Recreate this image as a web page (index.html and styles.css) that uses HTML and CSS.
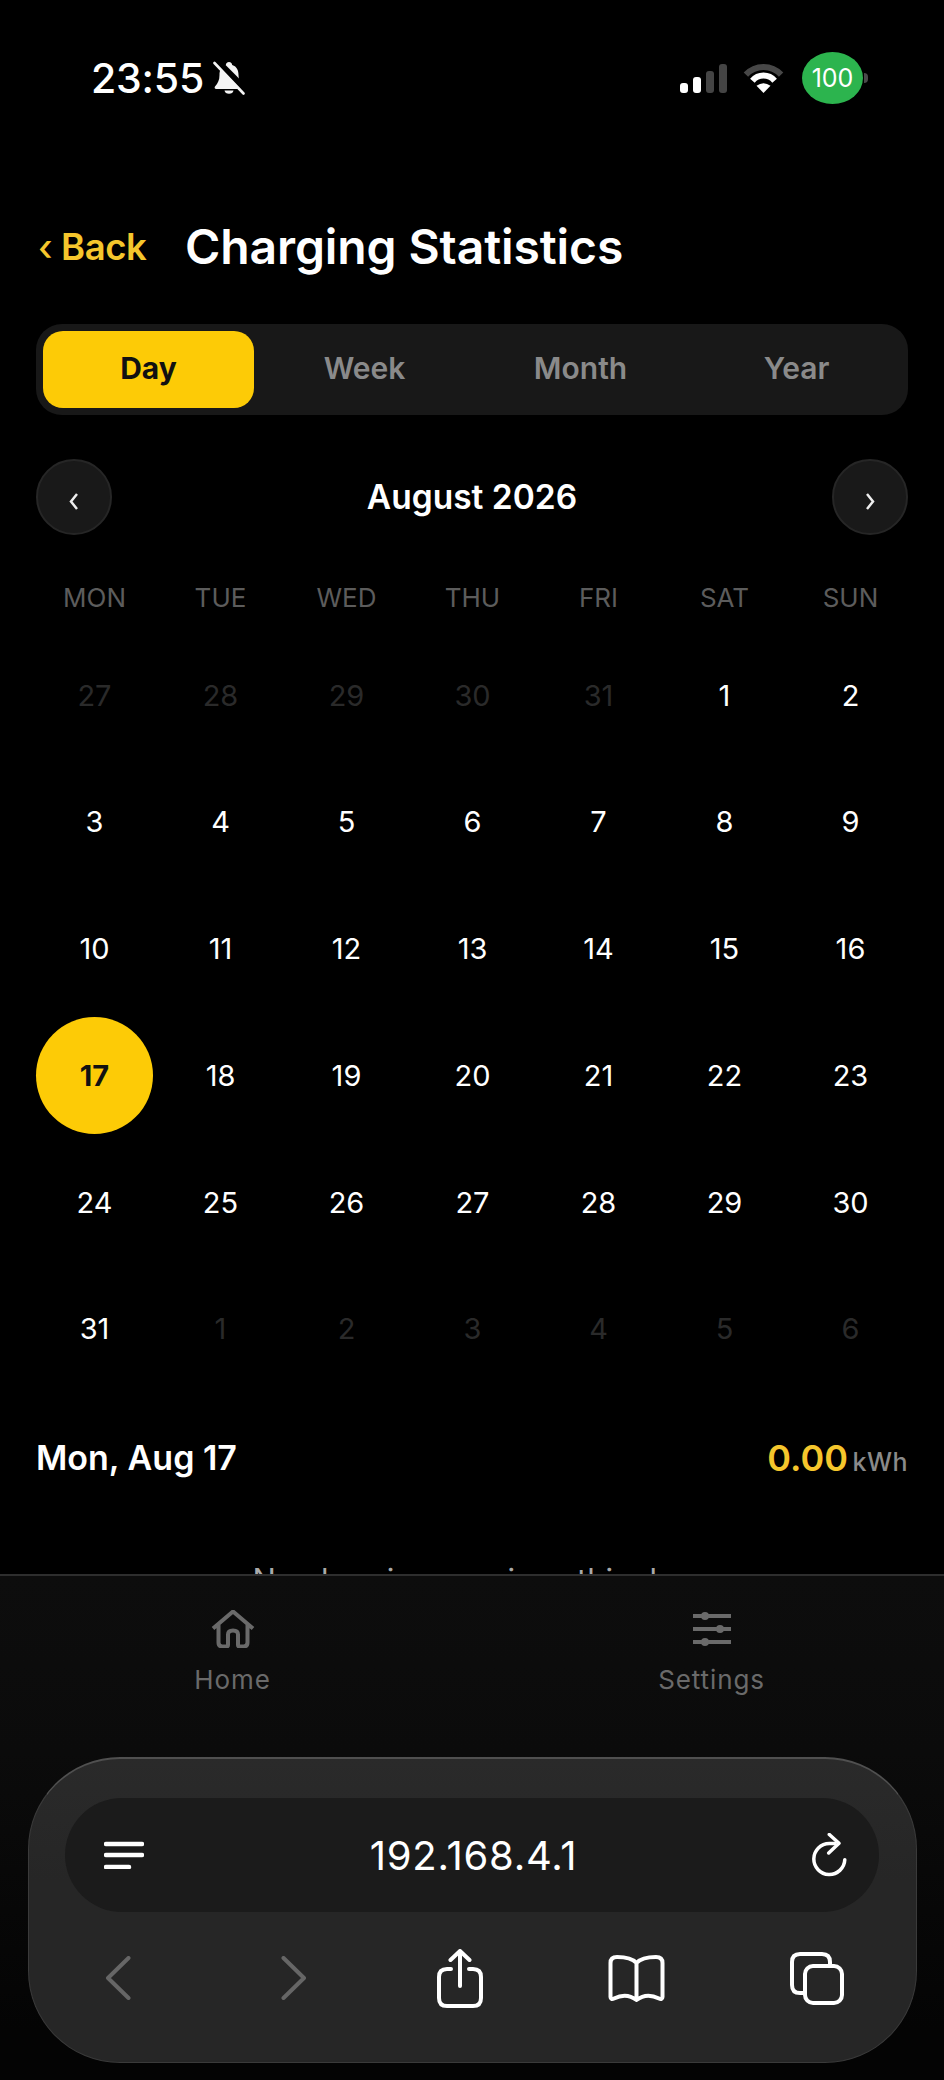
FILE: index.html
```html
<!DOCTYPE html>
<html lang="en">
<head>
  <meta charset="UTF-8" />
  <meta name="viewport" content="width=device-width, initial-scale=1" />
  <title>Charging Statistics</title>
  <link rel="stylesheet" href="styles.css">
</head>
<body>
  <!-- Status bar -->
  <div class="status">
    <div class="status-left">
      <span class="time">23:55</span>
      <svg class="bell" viewBox="0 0 32 34">
        <path d="M16 1c-2 0-3 1.400-3.200 3C8 5.500 6.500 9.500 6.500 14c0 5-1.500 8-4.500 11.500-.8 1-.2 2.500 1.200 2.500h25.600c1.400 0 2-1.500 1.200-2.500C27 22 25.500 19 25.500 14c0-4.500-1.500-8.500-6.300-10C19 2.400 18 1 16 1z" fill="#f4f4f4"/>
        <path d="M11.500 29.500a4.600 4.200 0 0 0 9 0z" fill="#f4f4f4"/>
        <path d="M3 -1L35 31" stroke="#000" stroke-width="6.500"/>
        <path d="M1.500 2L30.500 32.500" stroke="#f4f4f4" stroke-width="2.600" stroke-linecap="round"/>
      </svg>
    </div>
    <div class="status-right">
      <div class="signal">
        <i class="bar bar1"></i><i class="bar bar2"></i><i class="bar bar3"></i><i class="bar bar4"></i>
      </div>
      <svg class="wifi" viewBox="0 0 41 30">
        <path d="M2.900 11.600A24 24 0 0 1 38.100 11.600" fill="none" stroke="#474747" stroke-width="6"/>
        <path d="M9.400 17.700A14.500 14.500 0 0 1 31.600 17.700" fill="none" stroke="#fff" stroke-width="6"/>
        <path d="M20.500 30L13.500 22.800Q20.500 17.500 27.500 22.800Z" fill="#fff"/>
      </svg>
      <div class="battery">100</div>
      <i class="battery-nub"></i>
    </div>
  </div>

  <!-- Cabecera -->
  <div class="header">
    <a class="back"><span class="back-arrow">‹</span> Back</a>
    <h1>Charging Statistics</h1>
  </div>

  <div class="content">
    <div class="segment">
      <button class="seg-btn active">Day</button>
      <button class="seg-btn">Week</button>
      <button class="seg-btn">Month</button>
      <button class="seg-btn">Year</button>
    </div>

    <div class="month-nav">
      <button class="nav-btn">
        <svg viewBox="0 0 14 20"><path d="M10 3L4 10.500 10 18" /></svg>
      </button>
      <div class="month-title">August 2026</div>
      <button class="nav-btn">
        <svg viewBox="0 0 14 20"><path d="M4 3L10 10.500 4 18" /></svg>
      </button>
    </div>

    <div class="weekdays">
      <span>MON</span><span>TUE</span><span>WED</span><span>THU</span><span>FRI</span><span>SAT</span><span>SUN</span>
    </div>

    <div class="days">
      <div class="day off">27</div><div class="day off">28</div><div class="day off">29</div><div class="day off">30</div><div class="day off">31</div><div class="day">1</div><div class="day">2</div>
      <div class="day">3</div><div class="day">4</div><div class="day">5</div><div class="day">6</div><div class="day">7</div><div class="day">8</div><div class="day">9</div>
      <div class="day">10</div><div class="day">11</div><div class="day">12</div><div class="day">13</div><div class="day">14</div><div class="day">15</div><div class="day">16</div>
      <div class="day selected">17</div><div class="day">18</div><div class="day">19</div><div class="day">20</div><div class="day">21</div><div class="day">22</div><div class="day">23</div>
      <div class="day">24</div><div class="day">25</div><div class="day">26</div><div class="day">27</div><div class="day">28</div><div class="day">29</div><div class="day">30</div>
      <div class="day">31</div><div class="day off">1</div><div class="day off">2</div><div class="day off">3</div><div class="day off">4</div><div class="day off">5</div><div class="day off">6</div>
    </div>

    <div class="summary">
      <span class="summary-date">Mon, Aug 17</span>
      <span class="summary-total"><b>0.00</b> <small>kWh</small></span>
    </div>

    <p class="empty">No charging sessions this day</p>
  </div>

  <div class="bottom">
    <div class="tabbar">
      <a class="tab">
        <svg class="tab-icon" viewBox="0 0 44 38">
          <path d="M2 18.500L22 1.500 42 18.500M7.500 14.500V32.500Q7.500 36.500 11.500 36.500H15.500Q17 36.500 17 35V24.500Q17 20.500 22 20.500 27 20.500 27 24.500V35Q27 36.500 28.500 36.500H32.500Q36.500 36.500 36.500 32.500V14.500"/>
        </svg>
        <span>Home</span>
      </a>
      <a class="tab">
        <svg class="tab-icon tab-icon-sliders" viewBox="0 0 38 34">
          <path d="M0 4H38M0 17H38M0 30H38"/>
          <circle cx="12" cy="4" r="4"/><circle cx="27" cy="17" r="4"/><circle cx="12" cy="30" r="4"/>
        </svg>
        <span>Settings</span>
      </a>
    </div>

    <!-- Barra del navegador -->
    <div class="browser">
      <div class="url-bar">
        <svg class="menu-icon" viewBox="0 0 40 28">
          <path d="M2 3H38M2 14H38M2 26H25"/>
        </svg>
        <span class="url">192.168.4.1</span>
        <svg class="reload-icon" viewBox="0 0 36 44">
          <path d="M23 10.500H17.300A15.500 15.500 0 1 0 32.800 26.700"/>
          <path d="M17.300 1.500L27 10.300 16.700 20"/>
        </svg>
      </div>
      <div class="browser-tools">
        <svg class="tool tool-nav off" viewBox="0 0 26 44"><path d="M23.500 2L3 22 23.500 42"/></svg>
        <svg class="tool tool-nav tool-forward off" viewBox="0 0 26 44"><path d="M2.500 2L23 22 2.500 42"/></svg>
        <svg class="tool tool-share" viewBox="0 0 46 59">
          <path d="M14 20H10Q2 20 2 28V49Q2 57 10 57H36Q44 57 44 49V28Q44 20 36 20H32"/>
          <path d="M23 37V2M13.500 11L23 2 32.500 11"/>
        </svg>
        <svg class="tool tool-book" viewBox="0 0 57 47">
          <path d="M28.500 8C24 3 17 2 9 2Q2.500 2 2.500 8V42C2.500 44 4 44.500 6 43.500 14 39.500 22 40 28.500 45 35 40 43 39.500 51 43.500 53 44.500 54.500 44 54.500 42V8Q54.500 2 48 2C40 2 33 3 28.500 8ZM28.500 8V44"/>
        </svg>
        <svg class="tool tool-tabs" viewBox="0 0 54 53">
          <path d="M15 41H10Q2 41 2 33V10Q2 2 10 2H32Q40 2 40 10V13"/>
          <rect x="15" y="14" width="37" height="37" rx="8"/>
        </svg>
      </div>
    </div>
  </div>
</body>
</html>
```

FILE: styles.css
```css
* {
  box-sizing: border-box;
}
html, body {
  margin: 0;
  background: #000000;
}
body {
  width: 944px;
  height: 2080px;
  overflow: hidden;
  font-family: 'Inter', 'Liberation Sans', sans-serif;
  color: #ffffff;
  display: flex;
  flex-direction: column;
}

/* Status bar */
.status {
  display: flex;
  justify-content: space-between;
  align-items: center;
  height: 52px;
  margin-top: 52px;
  padding: 0 76px 0 91px;
}
.status-left {
  display: flex;
  align-items: center;
  gap: 9px;
}
.time {
  font-size: 41px;
  font-weight: 500;
  letter-spacing: -0.2px;
}
.bell {
  width: 32px;
  height: 34px;
}
.status-right {
  display: flex;
  align-items: center;
}
.signal {
  display: flex;
  align-items: flex-end;
  gap: 5px;
  height: 29px;
  margin-right: 16px;
}
.bar {
  width: 8px;
  border-radius: 3px;
  background: #ffffff;
}
.bar1 { height: 10px; }
.bar2 { height: 16px; }
.bar3 { height: 22px; background: #444; }
.bar4 { height: 29px; background: #444; }
.wifi {
  width: 41px;
  height: 30px;
  margin-right: 18px;
}
.battery {
  width: 61px;
  height: 52px;
  border-radius: 50%;
  background: #2cb44e;
  display: flex;
  align-items: center;
  justify-content: center;
  font-size: 25px;
  font-weight: 400;
}
.battery-nub {
  width: 4px;
  height: 10px;
  margin-left: 1px;
  border-radius: 0 5px 5px 0;
  background: #4a4a4a;
}

/* Cabecera */
.header {
  display: flex;
  align-items: center;
  height: 50px;
  margin-top: 118px;
  padding: 0 38px;
}
.back {
  width: 147px;
  font-size: 36.500px;
  font-weight: 600;
  color: #f5c62c;
  letter-spacing: -0.4px;
}
.back-arrow {
  font-weight: 500;
}
h1 {
  margin: 0 0 2px 0;
  font-size: 48px;
  font-weight: 600;
  letter-spacing: -0.1px;
}

.content {
  height: 1302px;
  overflow: hidden;
  padding: 52px 36px 0 36px;
}

/* Selector dia / semana */
.segment {
  display: flex;
  gap: 5px;
  height: 91px;
  padding: 7px 6px 7px 7px;
  background: #181818;
  border-radius: 26px;
}
.seg-btn {
  flex: 1;
  padding: 0 0 3px 0;
  border: none;
  border-radius: 20px;
  background: transparent;
  font-family: inherit;
  font-size: 30px;
  font-weight: 600;
  color: #8a8a8a;
}
.seg-btn.active {
  background: #fdcb06;
  color: #111111;
  font-weight: 700;
}

/* Mes */
.month-nav {
  display: flex;
  justify-content: space-between;
  align-items: center;
  margin-top: 44px;
}
.nav-btn {
  width: 76px;
  height: 76px;
  padding: 8px 0 0 0;
  border: 2px solid #262626;
  border-radius: 50%;
  background: #191919;
  display: flex;
  align-items: center;
  justify-content: center;
}
.nav-btn svg {
  width: 14px;
  height: 20px;
  fill: none;
  stroke: #eeeeee;
  stroke-width: 2.500;
}
.month-title {
  font-size: 33.500px;
  font-weight: 600;
}

/* Calendario */
.weekdays, .days {
  display: grid;
  grid-template-columns: repeat(7, 117px);
  column-gap: 9px;
}
.weekdays {
  margin-top: 48px;
  height: 30px;
  line-height: 30px;
  text-align: center;
  font-size: 26px;
  color: #5c5c5c;
}
.days {
  margin-top: 23.500px;
  row-gap: 9.800px;
}
.day {
  height: 117px;
  border-radius: 50%;
  display: flex;
  align-items: center;
  justify-content: center;
  font-size: 29px;
  color: #ffffff;
}
.day.off {
  color: #2a2a2a;
}
.day.selected {
  background: #fdcb06;
  color: #111111;
  font-weight: 700;
}

.summary {
  display: flex;
  justify-content: space-between;
  align-items: center;
  height: 40px;
  margin-top: 50.500px;
}
.summary-date {
  font-size: 34px;
  font-weight: 600;
}
.summary-total b {
  font-size: 36px;
  font-weight: 600;
  color: #f5c62c;
}
.summary-total small {
  font-size: 25px;
  font-weight: 500;
  color: #8a8a8a;
  letter-spacing: 0.5px;
}
.empty {
  margin: 83.500px 0 0 0;
  text-align: center;
  font-size: 31px;
  line-height: 38px;
  color: #aaaaaa;
}

/* Tab bar */
.bottom {
  flex: 1;
  background: linear-gradient(#0d0d0d, #0b0b0b 35%, #040404 90%);
  border-top: 2px solid #2e2e2e;
}
.tabbar {
  display: grid;
  grid-template-columns: 479px 479px;
  justify-content: center;
  height: 181px;
}
.tab {
  display: flex;
  flex-direction: column;
  align-items: center;
  padding-top: 34px;
  font-size: 26px;
  letter-spacing: 0.900px;
  line-height: 32px;
  color: #6a6a6a;
}
.tab-icon {
  width: 44px;
  height: 38px;
  margin-bottom: 16px;
  fill: none;
  stroke: #6a6a6a;
  stroke-width: 4;
  stroke-linejoin: round;
}
.tab-icon-sliders {
  width: 38px;
  height: 34px;
  margin: 2px 0 18px 0;
}
.tab-icon circle {
  fill: #6a6a6a;
  stroke: none;
}

/* Barra del navegador */
.browser {
  width: 889px;
  height: 306px;
  margin-left: 28px;
  padding: 39px 37px 0 36px;
  border-radius: 92px;
  background: linear-gradient(#2a2a2a, #262626 40%);
  border: 1px solid #3a3a3a;
  border-top: 2px solid #505050;
}
.url-bar {
  position: relative;
  display: flex;
  justify-content: space-between;
  align-items: center;
  height: 114px;
  padding: 0 31px 0 39px;
  border-radius: 57px;
  background: #1b1b1b;
}
.menu-icon {
  width: 40px;
  height: 28px;
  fill: none;
  stroke: #ffffff;
  stroke-width: 4.500;
  stroke-linecap: round;
}
.url {
  margin-right: 9px;
  font-size: 40px;
  letter-spacing: 0.800px;
}
.reload-icon {
  width: 36px;
  height: 44px;
  fill: none;
  stroke: #ffffff;
  stroke-width: 3.500;
  stroke-linecap: round;
  stroke-linejoin: round;
}
.browser-tools {
  display: flex;
  align-items: center;
  height: 118px;
  margin-top: 7px;
  padding-left: 40px;
}
.tool {
  flex: none;
  fill: none;
  stroke: #ffffff;
  stroke-width: 4;
  stroke-linecap: round;
  stroke-linejoin: round;
}
.tool.off {
  stroke: #666666;
}
.tool-nav {
  width: 26px;
  height: 44px;
  margin-right: 150px;
}
.tool-forward {
  margin-right: 130px;
}
.tool-share {
  width: 46px;
  height: 59px;
  margin-right: 125px;
}
.tool-book {
  width: 57px;
  height: 47px;
  margin-right: 125px;
}
.tool-tabs {
  width: 54px;
  height: 53px;
}
```
